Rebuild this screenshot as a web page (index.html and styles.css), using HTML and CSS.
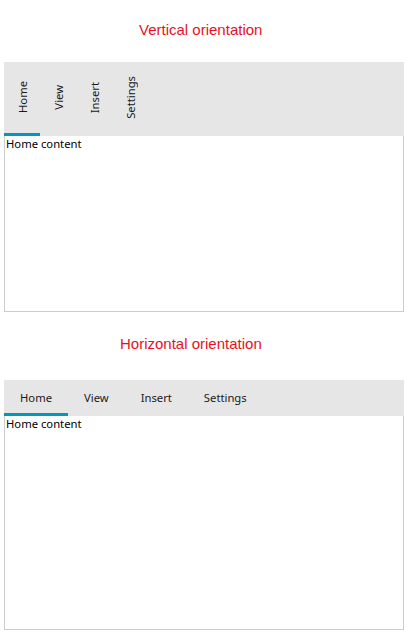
FILE: index.html
```html
<!DOCTYPE html>
<html>
<head>
<meta charset="utf-8">
<link rel="stylesheet" href="styles.css">
</head>
<body>
<div class="page">
  <div class="title title-vertical">Vertical orientation</div>
  <div class="tabview vertical">
    <div class="tabbar">
      <div class="tab selected"><span class="label">Home</span></div>
      <div class="tab"><span class="label">View</span></div>
      <div class="tab"><span class="label">Insert</span></div>
      <div class="tab"><span class="label">Settings</span></div>
    </div>
    <div class="content">Home content</div>
  </div>

  <div class="title title-horizontal">Horizontal orientation</div>
  <div class="tabview horizontal">
    <div class="tabbar">
      <div class="tab selected"><span class="label">Home</span></div>
      <div class="tab"><span class="label">View</span></div>
      <div class="tab"><span class="label">Insert</span></div>
      <div class="tab"><span class="label">Settings</span></div>
    </div>
    <div class="content">Home content</div>
  </div>
</div>
</body>
</html>
```

FILE: styles.css
```css
html, body {
  margin: 0;
  padding: 0;
  background: #ffffff;
}

.page {
  width: 400px;
  padding: 21px 0 0 4px;
  font-family: "Noto Sans", "Open Sans", sans-serif;
  font-size: 11.25px;
  color: #000000;
}

.title {
  font-family: "Liberation Sans", Arial, sans-serif;
  font-size: 15px;
  line-height: 17px;
  height: 17px;
  color: #e81123;
  white-space: nowrap;
}

.title-vertical {
  padding-left: 135px;
  margin-bottom: 24px;
}

.title-horizontal {
  margin-top: 23px;
  padding-left: 116px;
  margin-bottom: 28px;
}

.tabbar {
  display: flex;
  background: #e6e6e6;
}

.tab {
  display: flex;
  align-items: center;
  justify-content: center;
  box-sizing: border-box;
  border-bottom: 3px solid transparent;
  color: #1a1a1a;
  white-space: nowrap;
}

.tab.selected {
  border-bottom-color: #0099bc;
}

.vertical .tabbar {
  height: 74px;
}

.vertical .tab {
  width: 36px;
}

.vertical .label {
  writing-mode: vertical-rl;
  transform: rotate(180deg);
}

.horizontal .tabbar {
  height: 36px;
}

.horizontal .tab {
  padding: 1px 16px 0;
}

.content {
  box-sizing: border-box;
  border: 1px solid #cccccc;
  border-top: none;
  padding: 0 0 0 1px;
  white-space: nowrap;
}

.vertical .content {
  height: 176px;
}

.horizontal .content {
  height: 214px;
}
```
